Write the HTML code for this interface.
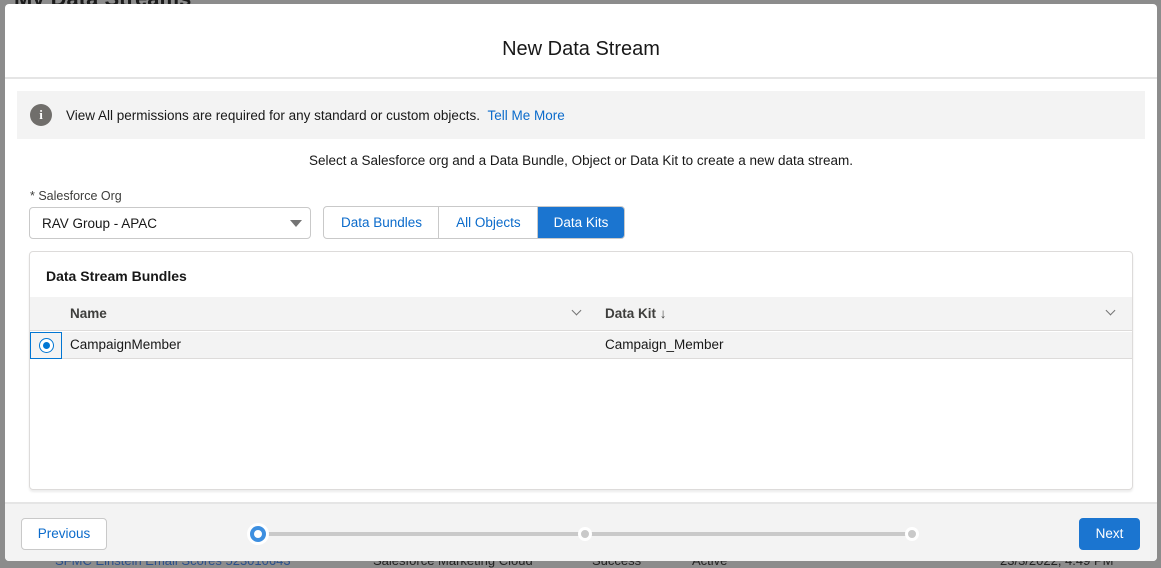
<!DOCTYPE html>
<html><head><meta charset="utf-8"><style>
*{box-sizing:border-box;margin:0;padding:0}
body{width:1161px;height:565px;background:#8c8c8c;font-family:"Liberation Sans",sans-serif;position:relative;overflow:hidden;color:#181818}
.bgtxt{position:absolute;color:#1b1b1b;font-size:22px;font-weight:bold;left:14px;top:-14px}
.bgrow{position:absolute;top:553px;font-size:13px;color:#2a4f8a;white-space:nowrap}
.modal{position:absolute;left:5px;top:4px;width:1152px;height:557px;background:#fff;border-radius:4px;overflow:hidden}
.hdr{height:75px;border-bottom:2px solid #e5e5e5;text-align:center;font-size:20px;padding-top:33px;line-height:24px;color:#181818}
.info{position:absolute;left:12px;top:87px;width:1128px;height:48px;background:#f3f3f3;display:flex;align-items:center;font-size:13.5px;color:#181818}
.ic{width:22px;height:22px;border-radius:50%;background:#706e6b;color:#fff;font-weight:bold;font-size:13px;text-align:center;line-height:22px;margin-left:13px;margin-right:14px;font-family:"Liberation Serif",serif}
a{color:#0b6bcb;text-decoration:none}
.sel{position:absolute;top:149px;width:100%;text-align:center;font-size:13.5px;color:#181818}
.lbl{position:absolute;left:25px;top:185px;font-size:12.5px;color:#3e3e3c}
.lbl b{color:#3e3e3c;font-weight:normal}
.dd{position:absolute;left:24px;top:203px;width:282px;height:32px;border:1px solid #c9c9c9;border-radius:4px;font-size:13.5px;line-height:31px;padding-left:12px}
.dd:after{content:"";position:absolute;right:8px;top:12px;border-left:6px solid transparent;border-right:6px solid transparent;border-top:7px solid #747474}
.tabs{position:absolute;left:318px;top:202px;height:33px;display:flex;border:1px solid #c9c9c9;border-radius:4px;overflow:hidden;font-size:13.5px}
.tabs div{padding:0 16px 0 17px;line-height:31px;color:#0b6bcb;border-right:1px solid #c9c9c9}
.tabs div.on{background:#1b75d0;color:#fff;border-right:none;padding:0 16px}
.card{position:absolute;left:24px;top:247px;width:1104px;height:239px;border:1px solid #dddbda;border-radius:4px;box-shadow:0 2px 2px rgba(0,0,0,.08)}
.ct{position:absolute;left:16px;top:16px;font-weight:bold;font-size:14px}
.th{position:absolute;left:0;top:45px;width:1102px;height:34px;background:#f3f3f3;border-bottom:1px solid #dddbda;font-size:13.5px;font-weight:bold;color:#3e3e3c}
.tr{position:absolute;left:0;top:80px;width:1102px;height:27px;background:#f3f3f3;border-bottom:1px solid #dddbda;font-size:13.5px}
.cell{position:absolute;line-height:34px}
.tr .cell{line-height:26px}
.chev{position:absolute;top:10px;width:7px;height:7px;border-right:1px solid #747474;border-bottom:1px solid #747474;transform:rotate(45deg)}
.rb{position:absolute;left:0;top:0;width:32px;height:27px;border:1px solid #0176d3}
.rb i{position:absolute;left:8px;top:5px;width:15px;height:15px;border-radius:50%;border:1px solid #0176d3;background:#fff}
.rb i:after{content:"";position:absolute;left:3px;top:3px;width:7px;height:7px;border-radius:50%;background:#0176d3}
.ftr{position:absolute;left:0;top:498px;width:1152px;height:59px;background:#f3f3f3;border-top:2px solid #e5e5e5}
.btn{position:absolute;top:14px;height:32px;border-radius:4px;font-size:13.5px;line-height:30px;text-align:center}
.prev{left:16px;width:86px;background:#fff;border:1px solid #c9c9c9;color:#0b6bcb}
.next{left:1074px;width:61px;background:#1b75d0;color:#fff;border:1px solid #1b75d0}
.bar{position:absolute;left:253px;top:28px;width:655px;height:4px;background:#c9c9c9}
.dot{position:absolute;width:14px;height:14px;border-radius:50%;background:#c9c9c9;border:3px solid #fff}
.dot.a{width:16px;height:16px;background:#fff;border:4px solid #3d8fe0;box-shadow:0 0 0 3px #fff}
</style></head><body>
<div class="bgtxt">My Data Streams</div>
<div class="bgrow" style="left:55px">SFMC Einstein Email Scores 523010643</div>
<div class="bgrow" style="left:373px;color:#222">Salesforce Marketing Cloud</div>
<div class="bgrow" style="left:592px;color:#222">Success</div>
<div class="bgrow" style="left:692px;color:#222">Active</div>
<div class="bgrow" style="left:1000px;color:#222">23/3/2022, 4:49 PM</div>
<div class="modal">
<div class="hdr">New Data Stream</div>
<div class="info"><div class="ic">i</div>View All permissions are required for any standard or custom objects.&nbsp;&nbsp;<a>Tell Me More</a></div>
<div class="sel">Select a Salesforce org and a Data Bundle, Object or Data Kit to create a new data stream.</div>
<div class="lbl"><b>*</b> Salesforce Org</div>
<div class="dd">RAV Group - APAC</div>
<div class="tabs"><div>Data Bundles</div><div>All Objects</div><div class="on">Data Kits</div></div>
<div class="card">
<div class="ct">Data Stream Bundles</div>
<div class="th"><div class="cell" style="left:40px">Name</div><div class="chev" style="left:543px"></div><div class="cell" style="left:575px">Data Kit ↓</div><div class="chev" style="left:1077px"></div></div>
<div class="tr"><div class="rb"><i></i></div><div class="cell" style="left:40px">CampaignMember</div><div class="cell" style="left:575px">Campaign_Member</div></div>
</div>
<div class="ftr">
<div class="btn prev">Previous</div>
<div class="bar"></div>
<div class="dot a" style="left:245px;top:22px"></div>
<div class="dot" style="left:573px;top:23px"></div>
<div class="dot" style="left:900px;top:23px"></div>
<div class="btn next">Next</div>
</div>
</div>
</body></html>
